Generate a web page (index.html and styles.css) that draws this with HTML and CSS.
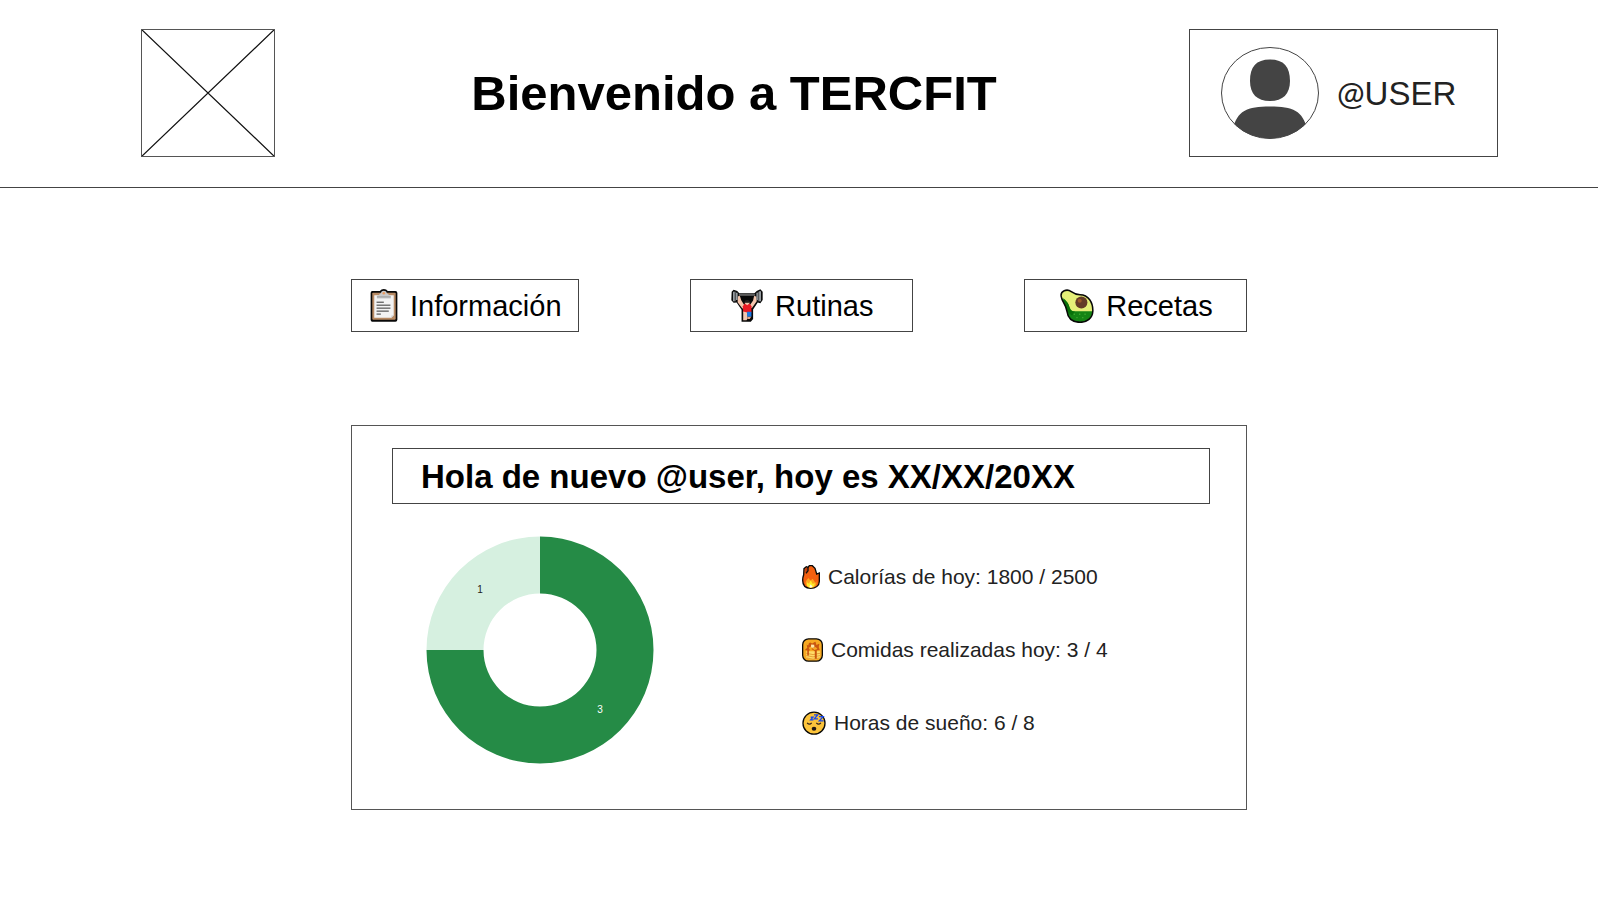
FILE: index.html
```html
<!DOCTYPE html>
<html lang="es">
<head>
<meta charset="utf-8">
<meta name="viewport" content="width=device-width, initial-scale=1">
<title>TERCFIT</title>
<link rel="stylesheet" href="styles.css">
</head>
<body>
<header class="header">
  <svg class="logo" viewBox="0 0 134 128" role="img" aria-label="Logo">
    <path d="M0 0L134 128M134 0L0 128"/>
  </svg>
  <h1 class="title">Bienvenido a TERCFIT</h1>
  <a class="user" href="#perfil">
    <svg class="avatar" viewBox="0 0 98 92" aria-hidden="true">
      <clipPath id="face"><ellipse cx="49" cy="46" rx="48.5" ry="45.5"/></clipPath>
      <ellipse class="avatar-ring" cx="49" cy="46" rx="48.5" ry="45.5"/>
      <path class="avatar-fill" clip-path="url(#face)" d="M49 12.5C63 12.5 69 20 69 34C69 47 62 54 49 54C36 54 29 47 29 34C29 20 35 12.5 49 12.5ZM49 59.500C72 59.500 82 64 86 82V95H12V82C16 64 26 59.500 49 59.500Z"/>
    </svg>
    <span class="user-name"><span class="at">@</span>USER</span>
  </a>
</header>

<main class="main">
  <nav class="nav">
    <a class="nav-link" href="#informacion">
      <svg class="icon-clip" viewBox="92 54 83 100" aria-hidden="true">
        <path d="M98 60H121Q125 54 133 54Q141 54 145 60H168Q174 60 174 66V147Q174 153 168 153H98Q93 153 93 147V66Q93 60 98 60Z" fill="#080808"/>
        <rect x="98" y="65" width="71" height="82" rx="3" fill="#b88a63"/>
        <path d="M104 73H163V134L156 141H104Z" fill="#f3f3f3"/>
        <path d="M163 134L156 141V134Z" fill="#c8c8c8"/>
        <path d="M112 83V76Q112 73 118 72L124 66Q125 59 133 59Q141 59 142 66L149 72Q154 73 154 76V83Z" fill="#c9c9c9"/>
        <circle cx="133" cy="67" r="4" fill="#e99b62"/>
        <path d="M112 78H154" stroke="#9b9b9b" stroke-width="3"/>
        <path d="M111 94H133M111 103H153M111 112H153M111 121H148M111 130H124" stroke="#333" stroke-width="3"/>
      </svg>
      <span>Información</span>
    </a>
    <a class="nav-link" href="#rutinas">
      <svg class="icon-lift" viewBox="155 54 97 100" aria-hidden="true">
        <path d="M157 62L163 56L174 60L180 67H226L233 60L244 55L251 62V87L244 97L236 95L222 116V145L215 153H187V117L172 95L163 96L156 88Z" fill="#080808"/>
        <path d="M179 72H228" stroke="#686868" stroke-width="5"/>
        <path d="M176 76L182 75L186 88L196 104L190 114L175 94ZM225 75L232 77L233 91L218 112L211 105L222 89Z" fill="#f4c5ac"/>
        <path d="M161 62H167V91H161ZM170 65H175V87H170ZM240 61H246V91H240ZM232 65H237V87H232Z" fill="#979da1"/>
        <path d="M166 62H170V91H166ZM236 62H240V91H236Z" fill="#55595c"/>
        <path d="M191 106L196 99H212L217 106V125H192Z" fill="#e81922"/>
        <path d="M197 94H211V98L204 103L197 98Z" fill="#f4c5ac"/>
        <path d="M196 90Q204 84 212 90L211 96H197Z" fill="#24201f"/>
        <path d="M192 122L205 125V144L202 149H192Z" fill="#f2c7b1"/>
        <path d="M204 123H217V138H204Z" fill="#1879e8"/>
        <path d="M205 138H216L212 145H205Z" fill="#e6a588"/>
      </svg>
      <span>Rutinas</span>
    </a>
    <a class="nav-link" href="#recetas">
      <svg class="icon-avocado" viewBox="140 53 100 101" aria-hidden="true">
        <clipPath id="avo"><path id="avo-shape" d="M143 75C140 59 160 51 173 61C181 67 186 70 199 70C224 70 238 94 237 119C236 140 220 152 199 152C177 152 163 141 160 119C157 97 146 94 143 75Z"/></clipPath>
        <g clip-path="url(#avo)">
          <path d="M140 53H240V154H140Z" fill="#e5ef78"/>
          <path d="M140 78Q151 82 159 91C168 100 168 119 181 119H240V154H140Z" fill="#148414"/>
          <path d="M149 80Q166 94 168 109Q171 121 184 120L175 132L160 120Z" fill="#087009"/>
          <circle cx="203" cy="93" r="18" fill="#643b27"/>
          <circle cx="198" cy="88" r="6" fill="#9b5829"/>
          <path d="M180 128H184M196 128H200M212 128H216M188 138H192M205 138H209" stroke="#3aa82d" stroke-width="4"/>
        </g>
        <use href="#avo-shape" fill="none" stroke="#080808" stroke-width="4.5"/>
      </svg>
      <span>Recetas</span>
    </a>
  </nav>

  <section class="card">
    <h2 class="greeting">Hola de nuevo @user, hoy es XX/XX/20XX</h2>
    <div class="summary">
      <svg class="chart" viewBox="0 0 228 228" role="img" aria-label="Comidas realizadas: 3, restantes: 1">
        <path d="M114 .5A113.5 113.5 0 1 1 .5 114H57.5A56.5 56.5 0 1 0 114 57.5Z" fill="#258b46"/>
        <path d="M.5 114A113.5 113.5 0 0 1 114 .5V57.5A56.5 56.5 0 0 0 57.5 114Z" fill="#d6f0e0"/>
        <text class="chart-label" x="54" y="57">1</text>
        <text class="chart-label chart-label-light" x="174" y="177">3</text>
      </svg>
      <ul class="stats">
        <li class="stat">
          <svg class="icon-fire" viewBox="36 41 54 72" aria-hidden="true">
            <path d="M41 70L42 52L49 46L54 48L58 43L67 43L75 51L78 61L80 68L88 65V90C88 104 76 111 62 111C47 111 38 102 38 87C38 80 39 75 41 70Z" fill="#f4600f" stroke="#080808" stroke-width="4"/>
            <path d="M46 51L54 50L52 59L46 65Z" fill="#b93b12"/>
            <path d="M54 48V58L48 66" fill="none" stroke="#111" stroke-width="4"/>
            <path d="M47 99C45 91 50 85 56 80L61 88L68 82L76 94L79 90Q83 109 62 109Q52 109 47 99Z" fill="#fba51d"/>
            <path d="M51 103V93L57 97L62 87L68 98L74 95Q75 109 62 109Q54 109 51 103Z" fill="#ffe928"/>
            <path d="M58 106L62 99L68 106L62 109Z" fill="#fffde4"/>
          </svg>
          <span>Calorías de hoy: 1800 / 2500</span>
        </li>
        <li class="stat">
          <svg class="icon-pancake" viewBox="35 38 64 72" aria-hidden="true">
            <rect x="37" y="40" width="60" height="68" rx="18" fill="#f7a922" stroke="#080808" stroke-width="4"/>
            <path d="M48 78V98Q67 108 90 98V78Z" fill="#ffdb67"/>
            <path d="M48 84Q68 92 90 84M48 91Q68 99 90 91M49 98Q68 106 89 98" fill="none" stroke="#d9821e" stroke-width="2"/>
            <path d="M49 56L60 51L66 54L75 49L88 56L86 65L89 74L80 75V101H74V77L62 70L56 77V91H51V75H43L51 67Z" fill="#c9560f"/>
            <path d="M45 56L57 49L54 60ZM76 48L88 54L79 59ZM55 67L63 63L70 68L77 65L82 71L73 74L66 69L59 74Z" fill="#f7a922"/>
            <path d="M63 57L72 58L73 66L65 67L62 63Z" fill="#ffe8a5"/>
          </svg>
          <span>Comidas realizadas hoy: 3 / 4</span>
        </li>
        <li class="stat">
          <svg class="icon-sleep" viewBox="35 32 72 73" aria-hidden="true">
            <circle cx="71" cy="69" r="33.5" fill="#fcc43b" stroke="#080808" stroke-width="4"/>
            <path d="M50 68Q57 76 64 68M78 68Q85 76 92 68" fill="none" stroke="#332017" stroke-width="3.5"/>
            <ellipse cx="71" cy="86" rx="7" ry="6" fill="#211713"/>
            <path d="M61 51H68L61 59H69M71 44H82L72 56H83M86 49H99L87 62H100" fill="none" stroke="#1646ee" stroke-width="4"/>
          </svg>
          <span>Horas de sueño: 6 / 8</span>
        </li>
      </ul>
    </div>
  </section>
</main>
</body>
</html>
```
FILE: styles.css
```css
* {
  box-sizing: border-box;
}

body {
  margin: 0;
  background: #fff;
  color: #000;
  font-family: "Liberation Sans", Arial, sans-serif;
}

.header {
  display: grid;
  grid-template-columns: 134px 1fr 309px;
  align-items: center;
  padding: 29px 100px 30px 141px;
  border-bottom: 1px solid #444;
}

.logo {
  display: block;
  width: 134px;
  height: 128px;
  border: 1px solid #555;
}

.logo path {
  stroke: #111;
  stroke-width: 1.3;
}

.title {
  margin: 0;
  padding-left: 4px;
  font-size: 49px;
  line-height: 56px;
  text-align: center;
}

.user {
  display: flex;
  align-items: center;
  gap: 18px;
  height: 128px;
  padding-left: 31px;
  border: 1px solid #444;
  color: #222;
  text-decoration: none;
}

.avatar {
  width: 98px;
  height: 92px;
}

.avatar-ring {
  fill: #fff;
  stroke: #444;
}

.avatar-fill {
  fill: #444;
}

.user-name {
  font-size: 33px;
  line-height: 40px;
}

.at {
  font-family: Lato, sans-serif;
}

.main {
  width: 90%;
  max-width: 896px;
  margin: 0 auto;
  padding: 91px 0 88px;
}

.nav {
  display: flex;
  justify-content: space-between;
  margin-bottom: 93px;
}

.nav-link {
  display: flex;
  align-items: center;
  justify-content: center;
  gap: 12px;
  min-width: 223px;
  height: 53px;
  padding: 0 16px 0 18px;
  border: 1px solid #444;
  color: #000;
  font-size: 29px;
  line-height: 36px;
  text-decoration: none;
}

.icon-clip {
  width: 28px;
  height: 33px;
}

.icon-lift {
  width: 32px;
  height: 33px;
}

.icon-avocado {
  width: 34px;
  height: 34px;
}

.card {
  padding: 22px 36px 45px 40px;
  border: 1px solid #555;
}

.greeting {
  margin: 0;
  padding: 9px 28px 7px;
  border: 1px solid #444;
  font-size: 33px;
  line-height: 38px;
}

.summary {
  display: flex;
  align-items: center;
  gap: 148px;
  padding: 32px 0 0 34px;
}

.chart {
  width: 228px;
  height: 228px;
}

.chart-label {
  fill: #222;
  font-size: 10px;
  text-anchor: middle;
}

.chart-label-light {
  fill: #fff;
}

.stats {
  display: grid;
  gap: 49px;
  margin: 0;
  padding: 0;
  list-style: none;
}

.stat {
  display: flex;
  align-items: center;
  gap: 8px;
  color: #222;
  font-size: 21px;
  line-height: 24px;
}

.icon-fire {
  width: 18px;
  height: 24px;
}

.icon-pancake {
  width: 21px;
  height: 24px;
}

.icon-sleep {
  width: 24px;
  height: 24px;
}
```
